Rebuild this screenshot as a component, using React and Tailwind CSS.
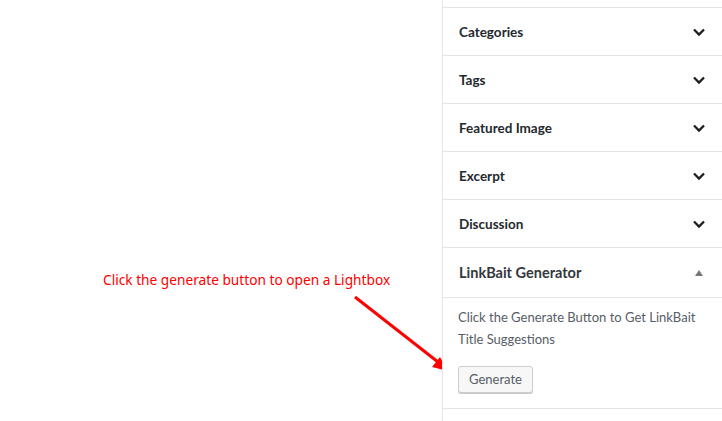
const panels = ['Categories', 'Tags', 'Featured Image', 'Excerpt', 'Discussion']

function Chevron() {
  return (
    <svg width="14" height="10" viewBox="0 0 14 10" className="text-[#191e23]">
      <path d="M2 2.5 L7 7.5 L12 2.5" fill="none" stroke="currentColor" strokeWidth="2.3" />
    </svg>
  )
}

export default function App() {
  return (
    <div className="w-[722px] h-[421px] flex bg-white overflow-hidden" style={{ fontFamily: 'Lato, "Open Sans", sans-serif' }}>
      <div className="flex-1 relative">
        <p
          className="absolute left-[103px] top-[270px] text-[13.7px] text-[#ff0000] whitespace-nowrap"
          style={{ fontFamily: '"Noto Sans", "Open Sans", sans-serif' }}
        >
          Click the generate button to open a Lightbox
        </p>
        <svg className="absolute left-0 top-0" width="442" height="421">
          <line x1="355" y1="297" x2="438" y2="362" stroke="#ff0000" strokeWidth="3" />
          <polygon points="448,371 432,367 440,357" fill="#ff0000" />
        </svg>
      </div>
      <div className="w-[280px] border-l border-[#e2e4e7] pt-[7px]">
        <div className="border-t border-[#e2e4e7]">
          {panels.map(p => (
            <div key={p} className="h-12 border-b border-[#e2e4e7] flex items-center justify-between pl-4 pr-4">
              <span className="text-[13.5px] font-bold text-[#23282d] pt-[2px]">{p}</span>
              <Chevron />
            </div>
          ))}
          <div className="h-[50px] border-b border-[#e2e4e7] flex items-center justify-between pl-4 pr-[16px]">
            <span className="text-[14.5px] font-bold text-[#32373c] pt-[1px]">LinkBait Generator</span>
            <svg width="10" height="8" viewBox="0 0 10 8" className="mr-[2px]">
              <polygon points="5,1 9,7 1,7" fill="#72777c" />
            </svg>
          </div>
          <div className="h-[111px] border-b border-[#e2e4e7] pl-[15px] pr-4 pt-[8px]">
            <p className="text-[13px] leading-[22px] text-[#555d66]">
              Click the Generate Button to Get LinkBait Title Suggestions
            </p>
            <button className="mt-[16px] h-[27px] px-[10px] text-[13px] text-[#555d66] bg-[#f7f7f7] border border-[#cccccc] rounded-[3px] shadow-[0_1px_0_#cccccc]">
              Generate
            </button>
          </div>
        </div>
      </div>
    </div>
  )
}
